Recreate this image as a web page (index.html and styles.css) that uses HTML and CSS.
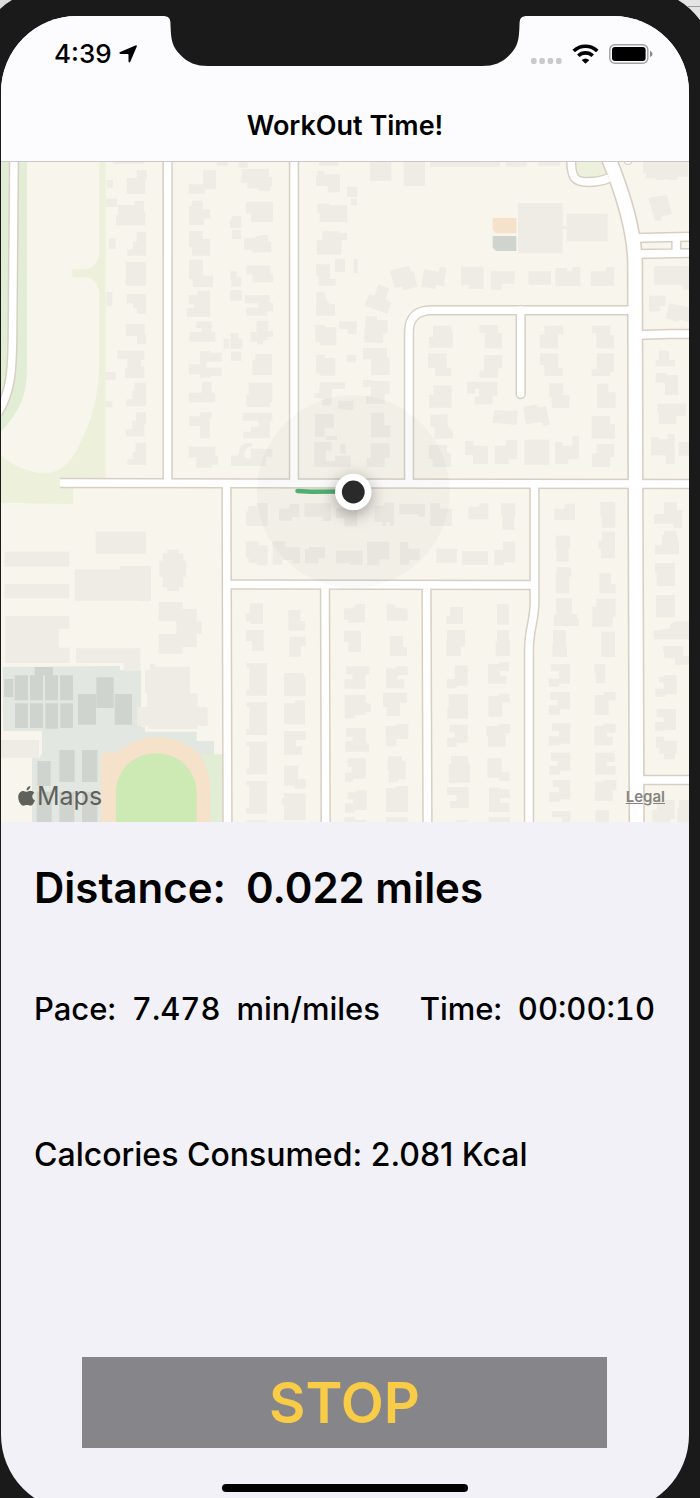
FILE: index.html
```html
<!DOCTYPE html>
<html lang="en">
<head>
<meta charset="utf-8">
<meta name="viewport" content="width=device-width, initial-scale=1">
<title>WorkOut Time!</title>
<link rel="stylesheet" href="styles.css">
</head>
<body>
<div class="device">
  <svg class="corner corner-left" width="12" height="9" viewBox="0 0 12 9" aria-hidden="true"><path fill="#d9dbda" d="M0 0H12Q5 4 0 9Z"/></svg>
  <svg class="corner corner-right" width="22" height="20" viewBox="0 0 22 20" aria-hidden="true"><path fill="#e4e4e4" d="M0 0H22V20Q12 7 0 0Z"/><path stroke="#9b9b9b" d="M10 6.500H22"/></svg>
  <div class="screen">
    <svg class="notch" width="366" height="50" viewBox="0 0 366 50" aria-hidden="true"><path fill="#1a1a1a" d="M0 0C7 0 8.500 2 8.500 9C9 24 10 30 18 38.500C26 47 34 50 46 50H320C332 50 340 47 348 38.500C356 30 357 24 357.500 9C357.500 2 359 0 366 0Z"/></svg>
    <header class="navbar">
      <div class="status">
        <div class="status-left">
          <span class="clock">4:39</span>
          <svg width="18" height="18" viewBox="0 0 18 18" aria-label="Location"><path d="M16.400 .4Q18.400 -.2 17.700 1.700L11.400 16.600Q10.300 18.600 9.500 16.600V9.700Q9.500 8.900 8.700 8.900H1.600Q-.8 8.300 1.200 7Z"/></svg>
        </div>
        <div class="status-right">
          <svg width="31" height="6" viewBox="0 0 31 6" aria-label="No signal" fill="#c9c9cb"><rect width="5.600" height="6" rx="2"/><rect x="8.300" width="5.600" height="6" rx="2"/><rect x="16.600" width="5.600" height="6" rx="2"/><rect x="25" width="5.600" height="6" rx="2"/></svg>
          <svg class="wifi" width="27" height="20" viewBox="0 0 27 20" aria-label="Wi-Fi"><g fill="none" stroke="#000" stroke-width="3.600"><path d="M1.700 7A17 17 0 0 1 25.300 7"/><path d="M6.300 11.700A10.500 10.500 0 0 1 20.700 11.700"/></g><path d="M13.500 19.800L9.700 16Q13.500 12.800 17.300 16Z"/></svg>
          <svg class="battery" width="44" height="20" viewBox="0 0 44 20" aria-label="Battery full"><rect x=".8" y=".8" width="38" height="18.400" rx="5" fill="none" stroke="#a3a3a5" stroke-width="1.500"/><rect x="3" y="3" width="33.600" height="14" rx="3"/><path fill="#8b8b8d" d="M41 6.800Q43.600 8 43.600 10T41 13.200Z"/></svg>
        </div>
      </div>
      <h1 class="title">WorkOut Time!</h1>
    </header>

    <section class="map" aria-label="Map">
      <svg class="map-canvas" viewBox="1 162 688 660" aria-hidden="true">
        <rect x="0" y="160" width="700" height="670" fill="#f8f5ed"/>
        <!-- parks -->
        <path fill="#e1edd4" d="M0 162H27V365C27 400 18 412 0 433Z"/>
        <g transform="translate(0 160) scale(.33333)">
          <path fill="#edf0da" d="M298 0H317V955H219V1032L0 1028V885Q60 935 130 940C180 940 215 905 235 860C278 780 298 700 298 600V400Q292 354 256 352H217V328H258Q290 323 298 285Z"/>
        </g>
        <!-- school grounds and running track -->
        <g transform="translate(0 480) scale(.33333)">
          <path fill="#e2e7e1" d="M8 561L360 558V571H423V740H435V755H590V783H642V825L590 1026H96V833H117L126 822V753H10Z"/>
          <path fill="#e1edd4" d="M590 823H668V1030H590Z"/>
          <path fill="#f6e1ca" d="M303 1030V818H350C380 795 420 771 470 771C530 771 580 800 600 825C622 860 631 900 631 930V1030Z"/>
          <path fill="#cdeab5" d="M348 1030V940C348 870 400 820 468 820S590 870 590 940V1030Z"/>
          <path fill="#cfd5ce" d="M13 597h27v54h-27zM44 586h40v75h-40zM90 586h39v75h-39zM135 586h39v75h-39zM180 586h39v75h-39zM45 670h39v74h-39zM90 670h39v74h-39zM136 670h38v76h-38zM181 670h38v74h-38zM104 561h55v25h-55zM289 592h52v92h-52zM234 642h54v92h-54zM344 642h52v92h-52zM178 810h46v96h-46zM246 810h46v96h-46zM112 843h40v75h-40zM110 935h45v95h-45zM178 935h45v95h-45zM246 935h46v95h-46z"/>
        </g>
        <!-- buildings -->
        <g fill="#efece5">
          <path transform="translate(0 160) scale(.33333)" d="M340 0H432V12H340ZM650 0H683V17H650ZM716 0H743V23H716ZM410 30H440V60H436V102H380V54H410ZM320 60H339V83H320ZM318 116H352V141H318ZM404 123H432V155H436V196H348V165H354V135H404ZM327 236H347V266H327ZM410 216H438V287H382V268H399V245H410ZM377 306H438V377H377ZM319 396H337V437H319ZM380 402H438V461H411V445H399V430H380ZM377 492H434V524H438V552H411V528H377ZM352 572H433V600H423V618H433V654H375V624H382V596H352ZM317 636H347V659H317ZM403 668H438V739H379V718H397V692H403ZM317 724H337V742H317ZM408 757H438V793H433V829H378V808H397V782H408ZM407 848H438V915H382V897H398V875H407ZM609 31H648V88H616V101H566V73H609ZM576 122H608V148H630V175H612V195H567V138H576ZM567 213H608V237H631V287H576V262H567ZM567 299H609V347H639V381H578V358H567ZM592 392H630V471H561V444H582V433H566V405H592ZM589 484H635V516H646V545H568V516H605V504H589ZM600 573H630V578H665V605H620V623H665V648H632V653H600V643H566V613H600ZM605 665H635V698H646V727H566V698H605ZM600 757H635V774H629V835H600V798H568V769H600ZM566 860H646V887H654V914H635V923H589V892H566ZM695 168H724V204H690V178H695ZM696 211H724V237H696ZM691 334H710V350H724V380H694V360H691ZM690 390H726V422H690ZM671 536H687V566H671ZM691 519H715V536H727V566H691ZM693 575H724V603H693Z"/>
          <path transform="translate(240 160) scale(.33333)" d="M237 0H295V17H237ZM5 27H87V51H96V80H91V92H55V85H22V68H2V57H5ZM18 125H99V186H33V160H18ZM60 225H84V244H94V277H37V269H12V234H46V228H60ZM19 316H91V340H99V367H37V343H19ZM14 405H89V429H99V454H82V467H19V443H55V430H14ZM49 482H85V514H99V531H82V541H70V553H52V545H32V516H49ZM46 582H96V645H37V600H46ZM26 668H97V727H90V741H19V704H26ZM8 758H97V782H90V835H10V815H33V800H55V782H8ZM-27 887H-5L0 860 15 849H37V860H25L13 876V890L32 898V866H97V890H78V918H-27ZM232 33H253V43H300V97H263V78H228V46H232ZM321 80H352V111H321ZM333 116H351V136H333ZM232 131H268V136H322V186H239V158H232ZM247 214H297V219H321V240H304L306 265H304V284H230V240H247ZM285 296H315V336H285ZM341 297H353V340H341ZM228 313H270V357H287V377H236V348H228ZM229 396H253L257 412 268 432H285V467H228V430H229ZM297 484H350V522H323V507H297ZM226 495H255V501H289V556H239V546H226ZM320 584H348V607H320ZM228 584H254V594H286V647H239V640H228ZM240 667H315V687H275V736H247V718L223 712V700H237ZM294 722H340V750H315V746H294ZM225 762H282V803H254V831H225ZM257 828H291V840H257ZM223 846H275V872H258V903H285V887H332V921H223ZM301 853H317V881H301ZM390 0H454V63H390ZM491 0H555V78H491ZM570 0H720V21H570ZM450 332L508 318 512 332 522 335 532 380 490 391 486 380 464 383ZM552 328L595 335 600 321 619 324 612 379 588 375 585 387 544 380ZM663 320H731V387H688V374H663ZM415 373L447 385 437 418 454 428 443 461 373 437 387 402 404 406ZM376 469H411V480H443V520H430V548H373V506H376ZM369 564H441V592H449V645H393V598H369ZM369 660H396V663H449V702H434V731H378V708H393V681H369ZM393 758H433V796H451V832H393ZM392 850H449V893H434V921H380V894H392ZM579 497H635V515H639V563H567V531H579ZM564 580H620V625H634V648H585V624H564ZM580 676H635V743H567V705H580ZM571 765L623 761V797L639 815V836H583V800H571ZM566 855H621V880H633V921H578V896H566Z"/>
          <path transform="translate(460 160) scale(.33333)" d="M21 665H112V708H98V733H44V710H57V686H46V700H21ZM60 0H120V20H60ZM137 0H200V20H137ZM235 0H300V18H235ZM549 0H684V50H652V60H623V57H615V60H586V55H558V38H549ZM174 129H308V198H320V161H443V244H320V207H308V280H174ZM565 115L582 110 620 105 636 162 606 170 605 180 586 184ZM92 334H164V371H125V389H92ZM205 334H273V375H205ZM286 324H321V334H337V321H361V378H286ZM392 334H438V321H463V378H392ZM582 318H697V389H669V374H582ZM567 407H617V438H600V454H567ZM628 430L697 444V489L656 478 654 487 617 474ZM58 495H113V520H126V565H74V519H58ZM73 585H127V625H114V653H58V632H71ZM103 750L145 753 173 751 170 795 97 788ZM189 741L232 733 234 742 258 739 270 795 250 798 246 786 198 793ZM15 843H40V857H84V912H39V885H15ZM138 840H172V898H146V912H104V857H138ZM193 839H268V914H193ZM285 846H307V857H337V828H357V898H325V912H285ZM253 497H310V522H294V565H239V524H253ZM240 580H295V624H308V648H253V615H240ZM268 670H310V705H328V744H275V711H268ZM396 497H451V526H462V565H409V520H396ZM410 580H462V635H450V648H395V627H410ZM411 671H445V697H467V744H411ZM395 768H451V792H465V836H395ZM410 852H463V891H450V921H396V880H410ZM597 572H627V599H645V619H587V599H597ZM587 639H619V645H654V705H615V668H587ZM592 731H678V767H649V792H596V760H592ZM573 832H596V838H623V822H644V912H617V886H573ZM656 846H697V887H656Z"/>
          <path transform="translate(0 480) scale(.33333)" d="M287 155H438V221H287ZM14 215H208V260H14ZM14 312H208V355H14ZM224 268H361V258H453V364H426V362H224ZM16 408H208V446H176V503H209V549H16ZM228 505H421V571H371V549H228ZM502 209H536V220H550V242H559V290H550V322H537V333H502V322H488V290H478V242H488V220H502ZM476 366H548V387H590V424H605V462H590V501H548V521H476V462H529V424H476ZM450 552H465V560H570V640H593V681H623V738H593V747H444V738H412V681H442V639H435V571H450ZM0 780H117V833H0Z"/>
          <path transform="translate(240 480) scale(.33333)" d="M25 78H50V69H83V138H18V94H25ZM117 86H148V72H178V111H155V122H117ZM193 70H273V123H247V110H193ZM288 85H352V139H313V114H288ZM404 77H432V68H462V137H450V126H438V137H426V126H404ZM478 72H555V110H535V103H478ZM571 69H600V86H636V138H571ZM18 184H56V196H83V256H50V248H26V235H18ZM98 184H136V202H180V250H157V240H128V254H98ZM195 207H207V201H255V235H235V250H195ZM288 212H368V254H330V250H288ZM381 185H448V238H418V256H381ZM480 186H505V206H539V240H508V254H480ZM589 206H651V248H589ZM666 213H744V255H666ZM30 370H69V432H32V425H18V400H28ZM18 450H71V512H36V483H18ZM19 549H81V647H19V630H28V562H19ZM19 667H81V765H19V748H28V680H19ZM19 785H81V883H19V866H28V798H19ZM19 903H81V1001H19V984H28V916H19ZM19 1021H81V1030H19ZM145 390H181V423H195V452H145ZM148 470H197V499H183V530H148ZM132 579H190L197 600V648H132ZM132 670H165V661H195V733H132ZM132 753H197V780H168V798H187V824H132ZM132 857H174V897H197V926H164V917H132ZM132 940H197V1020H132V975H125V955H132ZM312 385H335L350 372H375V428H325V420H312ZM312 452H363V516H325V485H312ZM318 559H388V583H377V626H313V598H337V583H318ZM314 645H377V668L393 672V695H377V705H345V715H314ZM318 744H378V790H387V815H316V783H338V770H318ZM323 835H378V896H340V905H315V878H335V860H323ZM323 937H350V931H380V990H343V998H315V970H340V958H323ZM313 1012H345V1020H380V1030H313ZM440 373H465V382L503 386V422H441ZM449 468H489V502H501V528H449ZM438 565H468V559H503V585H473V598H493V625H438ZM429 638H501V668H480V708H440V681H429ZM436 738H468V732H505V777H469V799H438ZM444 829H486V842H497V898H475V906H446V870H442ZM438 924H468V918H504V996H438ZM438 1012H503V1030H438ZM630 381H669V432H619V408H630ZM621 450H675V500H663V528H619V480H621ZM644 556H683V617H650V625H620V598H644ZM626 643H684V716H622V680H626ZM628 734H683V788H650V801H621V773H644V757H628ZM633 828H684V850H690V908H626V853H633ZM621 921H686V984H630V963H650V945H621ZM648 1020H684V1030H648Z"/>
          <path transform="translate(460 480) scale(.33333)" d="M25 80H58V70H85V118H25ZM123 70H166V112H163V149H127V105H123ZM129 185H166V247H132V256H103V210H129ZM111 373H147V434H111ZM111 451H147V480H150V528H107V485H111ZM84 552H118V546H147V573H120V587H140V611H84ZM85 648H118V641H149V667H127V710H85ZM79 738H118V732H150V760H137V800H84V768H79ZM82 835H125V877H148V903H118V893H82ZM87 923H122V928H150V954H120V968H148V996H87ZM86 1012H150V1030H86ZM283 86H314V71H345V120H283ZM287 167H330V204H326V245H289V206H287ZM290 262H328L334 270V290H328V340H287V280H290ZM287 355H336V402H351V415H356V438H281V404H289ZM279 451H318V500H321V531H277V490H279ZM273 552H330V611H297V620H266V596H297V572H273ZM271 636H330V688H300V704H266V676H292V660H271ZM276 730H331V791H298V796H266V769H297V753H276ZM273 818H331V872H300V884H268V857H292V843H273ZM278 900H331V958H300V965H268V937H297V921H278ZM276 993H331V1030H305V1012H276ZM421 66H466V143H425V110H421ZM426 155H465V235H423V207H416V182H426ZM418 280H453V312H467V340H418ZM409 356H467V410H458V440H397V380H409ZM424 455H465V531H424ZM403 552H436V610H407V580H403ZM404 645H432V636H467V661H446V705H404ZM403 738H430V731H467V758H440V770H458V796H403ZM406 818H464V845H440V858H467V884H406ZM406 905H430V900H469V932H458V963H404V930H406ZM406 991H447V1030H406ZM612 67H651V91H667V143H640V131H582V102H612ZM612 152H648L657 190V223H585V196H605V165H612ZM585 249H645V318H590V280H585ZM588 345H645V412H588ZM581 452L630 445V432L650 424H697V478H581ZM608 498H670V528H697V554H645V535H614ZM597 590H612V585H650V643H615V651H586V626H611V607H597ZM590 687H648V750H615V752H585V726H611V712H590ZM588 770H612V782H650V820H645V838H612V822H598V803H588ZM590 960H644V1017H630V1030H577V990H590ZM657 960H697V1030H652V985H657Z"/>
        </g>
        <g transform="translate(460 160) scale(.33333)">
          <path fill="#f6e1ca" d="M98 174H169V220H108L98 210Z"/>
          <path fill="#cfd5ce" d="M98 228H169V273H108L98 263Z"/>
          <path fill="#edf0da" d="M340 0H425L440 45Q390 60 347 40Z"/>
        </g>
        <!-- streets: casing first, then surface -->
        <defs>
          <g id="streets" fill="none">
            <path d="M14 160L12.500 340C12 375 10 393 -2 413"/>
            <path d="M167.600 160V483M294 160V483M60 483L350 483.500 700 484"/>
            <path d="M226.500 484L227.500 830M227 584.500L535 585M325 585L325.700 830M426.500 585L427.500 830"/>
            <path d="M534.500 484V602C534.500 622 529 628 529 650V830"/>
            <path d="M635 310.300H432Q409 310.300 409 332V484"/>
            <path stroke-linecap="round" d="M520.700 310V394"/>
            <path d="M571.200 160C571.200 178 575 182 588 182Q600 182 609 178"/>
            <path d="M634 238L700 236.500M636 254L700 253M676.300 237V254M636 335L670 334 700 334M637 780H700"/>
          </g>
          <path id="avenue" fill="none" d="M608.500 158C620 186 634 225 635 262L635.500 484 636.700 830"/>
        </defs>
        <circle cx="628" cy="160.500" r="4" fill="#fff" stroke="#d8cfc4" stroke-width="1.200"/>
        <use href="#streets" stroke="#d8cfc4" stroke-width="10.400"/>
        <use href="#avenue" stroke="#d8cfc4" stroke-width="16.400"/>
        <use href="#streets" stroke="#fff" stroke-width="7.400"/>
        <use href="#avenue" stroke="#fff" stroke-width="13.200"/>
        <!-- accuracy halo, travelled route, current position -->
        <circle cx="353.300" cy="491.500" r="96.500" fill="#000" fill-opacity=".025"/>
        <path d="M297.500 491L312 491.800 340 491.500" fill="none" stroke="#4fae70" stroke-width="4.600" stroke-linecap="round"/>
        <circle class="pin" cx="353.300" cy="492" r="18.300" fill="#fff"/>
        <circle cx="353.300" cy="492" r="11.400" fill="#2a2a2a"/>
      </svg>
      <div class="brand">
        <svg width="17" height="21" viewBox="0 0 17 21" aria-label="Apple" fill="#60605c"><path d="M8.700 5.700C9.700 5.700 10.600 4.700 12.300 4.700C14 4.700 15.500 5.600 16.300 6.900C13.300 8.600 13.700 12.900 16.900 14.200C16.100 16.600 14.400 19.700 12.500 19.700C11.200 19.700 10.600 19 9 19S6.700 19.700 5.500 19.700C3 19.700 .2 15.200 .2 11.200C.2 7.300 2.600 4.900 5.100 4.900C6.700 4.900 7.700 5.700 8.700 5.700Z"/><path d="M12.300 .1C12.500 2.500 10.500 4.400 8.600 4.400C8.300 2.200 10.300 .3 12.300 .1Z"/></svg>
        <span>Maps</span>
      </div>
      <a class="legal" href="#">Legal</a>
    </section>

    <main class="stats">
      <p class="distance"><span>Distance:</span><span>0.022 miles</span></p>
      <div class="row">
        <p class="metric"><span>Pace:</span><span>7.478</span><span>min/miles</span></p>
        <p class="metric"><span>Time:</span><span>00:00:10</span></p>
      </div>
      <p class="calories">Calcories Consumed: 2.081 Kcal</p>
      <button class="stop" type="button">STOP</button>
      <div class="home-indicator"></div>
    </main>
  </div>
</div>
</body>
</html>
```
FILE: styles.css
```css
* {
  box-sizing: border-box;
}

body,
h1,
p {
  margin: 0;
}

body {
  background: #1a1a1a;
  color: #000;
  font-family: Inter, "Liberation Sans", sans-serif;
}

.device {
  position: relative;
  overflow: hidden;
  padding: 16px 11px 0 1px;
}

.corner {
  position: absolute;
  top: 0;
}

.corner-left {
  left: 0;
}

.corner-right {
  right: 0;
}

.screen {
  position: relative;
  overflow: hidden;
  margin-bottom: -12px;
  border-radius: 76px;
  background: #f2f1f7;
}

.notch {
  position: absolute;
  top: 0;
  left: 50%;
  transform: translateX(-50%);
}

.navbar {
  display: flex;
  flex-direction: column;
  height: 146px;
  border-bottom: 1px solid #c9c9cb;
  background: #fcfcfe;
}

.status {
  display: flex;
  justify-content: space-between;
  align-items: center;
  padding: 21px 36px 0 53px;
}

.status-left,
.status-right {
  display: flex;
  align-items: center;
}

.status-left {
  gap: 7px;
}

.status-right {
  gap: 10px;
  align-items: flex-end;
}

.clock {
  font-size: 26px;
  font-weight: 500;
  line-height: 34px;
}

.title {
  margin-top: 37px;
  font-size: 27px;
  font-weight: 600;
  line-height: 36px;
  text-align: center;
}

.map {
  position: relative;
}

.map-canvas {
  display: block;
  width: 100%;
  height: auto;
}

.pin {
  filter: drop-shadow(0 4px 8px rgba(0, 0, 0, 0.35));
}

.brand {
  position: absolute;
  left: 17px;
  bottom: 10px;
  display: flex;
  align-items: center;
  gap: 2px;
  color: #60605c;
  font-size: 25px;
  line-height: 32px;
}

.legal {
  position: absolute;
  right: 24px;
  bottom: 15px;
  color: #85847f;
  font-size: 15px;
  font-weight: 600;
  line-height: 20px;
}

.stats {
  display: flex;
  flex-direction: column;
  padding: 38px 34px 19px 33px;
}

.distance {
  display: flex;
  gap: 20px;
  font-size: 42px;
  font-weight: 600;
  line-height: 56px;
}

.row {
  display: flex;
  justify-content: space-between;
  margin-top: 73px;
}

.metric {
  display: flex;
  gap: 16px;
  font-size: 31px;
  font-weight: 500;
  font-variant-numeric: tabular-nums;
  line-height: 40px;
}

.calories {
  margin-top: 106px;
  font-size: 32px;
  font-weight: 500;
  line-height: 40px;
}

.stop {
  margin: 182px 48px 0;
  padding: 10px 0 9px;
  border: 0;
  background: #868589;
  color: #f8cc46;
  font: 600 56px/72px Inter, "Liberation Sans", sans-serif;
}

.home-indicator {
  align-self: center;
  width: 246px;
  height: 8px;
  margin-top: 36px;
  border-radius: 4px;
  background: #000;
}
```
